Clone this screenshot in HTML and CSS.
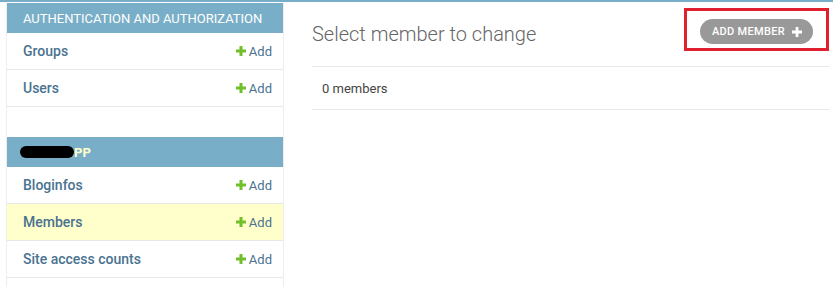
FILE: index.html
```html
<!DOCTYPE html>
<html>
<head>
<meta charset="utf-8">
<link rel="stylesheet" href="styles.css">
</head>
<body>
<div class="topbar"></div>
<div class="layout">
  <nav class="sidebar">
    <div class="module">
      <div class="caption">Authentication and Authorization</div>
      <div class="row"><span class="model">Groups</span><span class="add"><svg class="plus" viewBox="0 0 10 10"><path d="M3.5 0h3v3.5H10v3H6.5V10h-3V6.5H0v-3h3.5z"/></svg>Add</span></div>
      <div class="row"><span class="model">Users</span><span class="add"><svg class="plus" viewBox="0 0 10 10"><path d="M3.5 0h3v3.5H10v3H6.5V10h-3V6.5H0v-3h3.5z"/></svg>Add</span></div>
    </div>
    <div class="module">
      <div class="caption current"><span class="blot"></span>PP</div>
      <div class="row"><span class="model">Bloginfos</span><span class="add"><svg class="plus" viewBox="0 0 10 10"><path d="M3.5 0h3v3.5H10v3H6.5V10h-3V6.5H0v-3h3.5z"/></svg>Add</span></div>
      <div class="row selected"><span class="model">Members</span><span class="add"><svg class="plus" viewBox="0 0 10 10"><path d="M3.5 0h3v3.5H10v3H6.5V10h-3V6.5H0v-3h3.5z"/></svg>Add</span></div>
      <div class="row"><span class="model">Site access counts</span><span class="add"><svg class="plus" viewBox="0 0 10 10"><path d="M3.5 0h3v3.5H10v3H6.5V10h-3V6.5H0v-3h3.5z"/></svg>Add</span></div>
    </div>
  </nav>
  <main class="main">
    <div class="header">
      <h1 class="title">Select member to change</h1>
      <div class="highlight">
        <span class="btn">Add member<svg class="btn-plus" viewBox="0 0 10 10"><path d="M3.6 0h2.8v3.6H10v2.8H6.4V10H3.6V6.4H0V3.6h3.6z"/></svg></span>
      </div>
    </div>
    <div class="results">0 members</div>
  </main>
</div>
</body>
</html>
```
FILE: styles.css
```css
* { box-sizing: border-box; }
html, body { margin: 0; padding: 0; background: #fff; }
body {
  font-family: Roboto, "Liberation Sans", sans-serif;
  color: #333;
  width: 833px;
  height: 287px;
  overflow: hidden;
}
.topbar { height: 2px; background: #79aec8; }
.layout { display: flex; }
.sidebar {
  width: 278px;
  margin-left: 6px;
  padding-top: 1px;
  border-left: 1px solid #eee;
  border-right: 1px solid #eee;
  height: 285px;
}
.module { margin-bottom: 30px; }
.caption {
  height: 30px;
  background: #79aec8;
  color: #fff;
  font-size: 13px;
  letter-spacing: 0;
  text-transform: uppercase;
  padding-left: 16px;
  display: flex;
  align-items: center;
}
.caption.current { color: #ffc; font-weight: 700; }
.blot {
  display: inline-block;
  width: 54px;
  height: 12px;
  background: #000;
  border-radius: 6px;
  margin-left: -3px;
}
.row {
  height: 37px;
  border-bottom: 1px solid #e8e8e8;
  display: flex;
  align-items: center;
  justify-content: space-between;
  padding: 0 11px 0 16px;
}
.row.selected { background: #ffffcc; }
.model { color: #4a7390; font-weight: 500; font-size: 14px; }
.add { color: #4a7390; font-size: 13px; display: flex; align-items: center; }
.plus { width: 10px; height: 10px; fill: #70bf2b; margin-right: 3px; }
.main { flex: 1; padding-left: 28px; padding-right: 4px; }
.header { height: 64px; display: flex; justify-content: space-between; align-items: flex-start; }
.title {
  margin: 0;
  align-self: center;
  font-size: 20px;
  font-weight: 300;
  color: #666;
}
.highlight {
  margin-top: 6px;
  border: 3px solid #e0202e;
  padding: 8px 13px 4px 13px;
}
.btn {
  display: flex;
  align-items: center;
  height: 25px;
  width: 113px;
  padding-left: 12px;
  background: #999;
  color: #fff;
  border-radius: 13px;
  font-size: 11px;
  font-weight: 500;
  letter-spacing: 0.3px;
  text-transform: uppercase;
}
.btn-plus { width: 10px; height: 10px; fill: #fff; margin-left: 7px; }
.results {
  border-top: 1px solid #e8e8e8;
  border-bottom: 1px solid #e8e8e8;
  height: 44px;
  padding-left: 10px;
  display: flex;
  align-items: center;
  font-size: 13px;
  color: #444;
}
```
